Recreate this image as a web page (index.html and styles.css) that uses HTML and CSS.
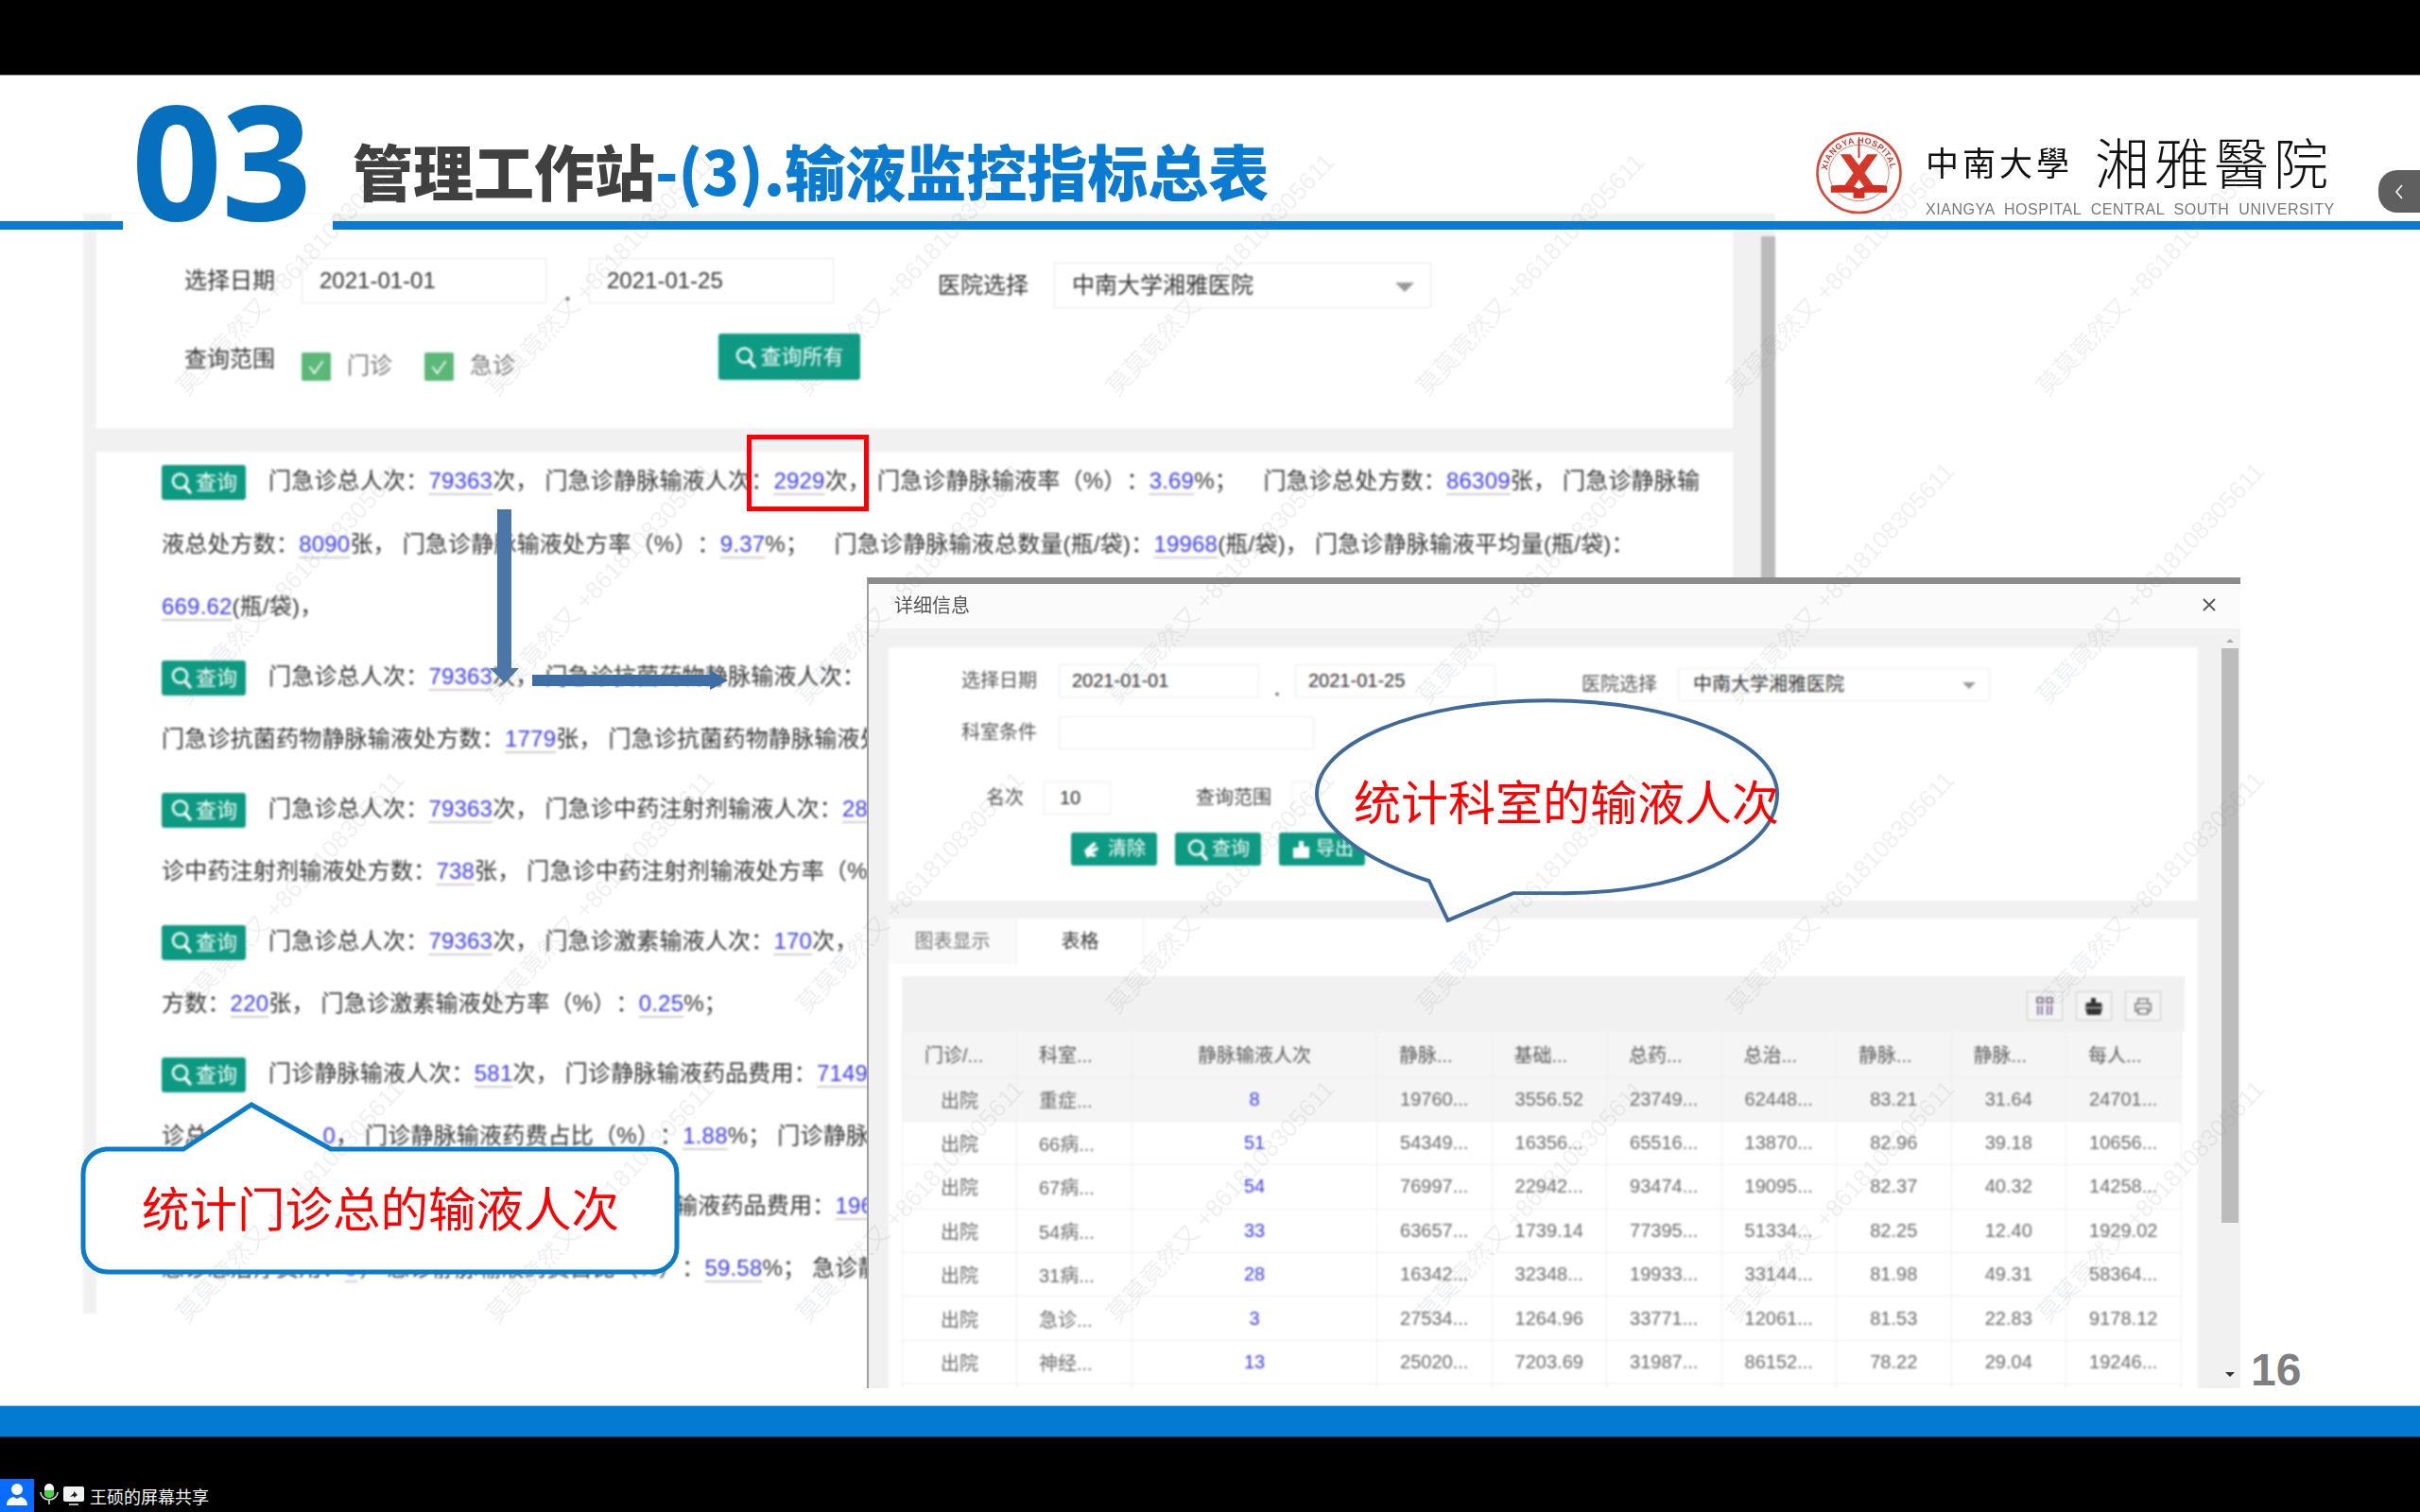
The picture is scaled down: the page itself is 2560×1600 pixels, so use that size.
FILE: index.html
```html
<!DOCTYPE html>
<html lang="zh-CN">
<head>
<meta charset="utf-8">
<title>输液监控指标总表</title>
<link rel="stylesheet" href="styles.css">
</head>
<body>
<svg class="defs" width="0" height="0" aria-hidden="true">
  <symbol id="mag" viewBox="0 0 24 24"><circle cx="10.5" cy="10" r="7.5" fill="none" stroke="currentColor" stroke-width="2.4"/><path d="M16 16l5 6" stroke="currentColor" stroke-width="3.4" stroke-linecap="round"/></symbol>
</svg>
<div class="topbar"></div>
<main class="slide">
  <div class="shot">
    <section class="card query">
      <div class="qrow">
        <span class="lbl">选择日期</span>
        <span class="inp date">2021-01-01</span>
        <span class="sep">.</span>
        <span class="inp date">2021-01-25</span>
        <span class="lbl hosp">医院选择</span>
        <span class="inp sel">中南大学湘雅医院<i class="caret"></i></span>
      </div>
      <div class="qrow second">
        <span class="lbl scope">查询范围</span>
        <span class="chk"><svg viewBox="0 0 30 30"><path d="M8 15l5 7 9-13" fill="none" stroke="#fff" stroke-width="1.6"/></svg></span>
        <span class="chklbl">门诊</span>
        <span class="chk"><svg viewBox="0 0 30 30"><path d="M8 15l5 7 9-13" fill="none" stroke="#fff" stroke-width="1.6"/></svg></span>
        <span class="chklbl">急诊</span>
        <span class="btn big"><svg class="mg"><use href="#mag"/></svg>查询所有</span>
      </div>
    </section>
    <section class="card stats">
      <div class="block">
        <p class="line"><span class="btn"><svg class="mg"><use href="#mag"/></svg>查询</span>门急诊总人次：<u>79363</u>次， 门急诊静脉输液人次：<u>2929</u>次， 门急诊静脉输液率（%）：<u>3.69</u>%；&nbsp;&nbsp;&nbsp; 门急诊总处方数：<u>86309</u>张， 门急诊静脉输</p>
        <p class="line">液总处方数：<u>8090</u>张， 门急诊静脉输液处方率（%）：<u>9.37</u>%；&nbsp;&nbsp;&nbsp; 门急诊静脉输液总数量(瓶/袋)：<u>19968</u>(瓶/袋)， 门急诊静脉输液平均量(瓶/袋)：</p>
        <p class="line"><u>669.62</u>(瓶/袋)，</p>
      </div>
      <div class="block">
        <p class="line"><span class="btn"><svg class="mg"><use href="#mag"/></svg>查询</span>门急诊总人次：<u>79363</u>次， 门急诊抗菌药物静脉输液人次：</p>
        <p class="line">门急诊抗菌药物静脉输液处方数：<u>1779</u>张， 门急诊抗菌药物静脉输液处</p>
      </div>
      <div class="block">
        <p class="line"><span class="btn"><svg class="mg"><use href="#mag"/></svg>查询</span>门急诊总人次：<u>79363</u>次， 门急诊中药注射剂输液人次：<u>28</u></p>
        <p class="line">诊中药注射剂输液处方数：<u>738</u>张， 门急诊中药注射剂输液处方率（%</p>
      </div>
      <div class="block">
        <p class="line"><span class="btn"><svg class="mg"><use href="#mag"/></svg>查询</span>门急诊总人次：<u>79363</u>次， 门急诊激素输液人次：<u>170</u>次，</p>
        <p class="line">方数：<u>220</u>张， 门急诊激素输液处方率（%）：<u>0.25</u>%；</p>
      </div>
      <div class="block">
        <p class="line"><span class="btn"><svg class="mg"><use href="#mag"/></svg>查询</span>门诊静脉输液人次：<u>581</u>次， 门诊静脉输液药品费用：<u>7149</u></p>
        <p class="line">诊总<span class="gap"></span><u>0</u>， 门诊静脉输液药费占比（%）：<u>1.88</u>%； 门诊静脉</p>
      </div>
      <div class="block">
        <p class="line after-callout">输液药品费用：<u>196</u></p>
        <p class="line">急诊总治疗费用：<u>0</u>， 急诊静脉输液药费占比（%）：<u>59.58</u>%； 急诊静</p>
      </div>
    </section>
    <div class="pagebar"></div>
  </div>

  <header class="brand">
    <div class="num-mask"></div>
    <div class="rule left"></div>
    <div class="rule right"></div>
    <div class="num">03</div>
    <h1 class="title"><span class="dark">管理工作站</span><span class="blue">-(3).输液监控指标总表</span></h1>
  </header>

  <div class="logo">
    <svg class="seal" viewBox="0 0 92 88">
      <defs><path id="ringp" d="M12 44a34 32 0 1 1 68 0"/></defs>
      <ellipse cx="46" cy="44" rx="44.5" ry="42.5" fill="#fff" stroke="#d9493a" stroke-width="2.6"/>
      <ellipse cx="46" cy="44" rx="32" ry="30" fill="none" stroke="#e07a6c" stroke-width="1"/>
      <text class="ring"><textPath href="#ringp" startOffset="3%">XIANGYA HOSPITAL</textPath></text>
      <path d="M26 24h11l9 12 9-12h11L52 44l14 20H55L46 51l-9 13H26l14-20z" fill="#d6392a"/>
      <path d="M46 8v20" stroke="#d6392a" stroke-width="2"/>
      <path d="M16 58q16-3 30 3 14-6 30-3v7H52v6h-12v-6H16z" fill="#cf2e20"/>
    </svg>
    <div class="logo-words">
      <div class="logo-cn"><span class="cn-a">中南大學</span><span class="cn-b">湘雅醫院</span></div>
      <div class="logo-en">XIANGYA HOSPITAL CENTRAL SOUTH UNIVERSITY</div>
    </div>
  </div>
  <div class="collapse"><svg viewBox="0 0 12 20" class="chev"><path d="M9 3L3 10l6 7" fill="none" stroke="#fff" stroke-width="1.6"/></svg></div>

  <div class="redbox"></div>

  <svg class="arrows" viewBox="0 0 300 220">
    <path d="M5 0h15v168h8l-15 16-16-16h8z" transform="translate(5 0)" fill="#4a76a8"/>
    <path d="M47 175h188v-5l19 11-19 10v-4H47z" fill="#3f6ea5"/>
  </svg>

  <div class="modal">
    <div class="m-head"><span>详细信息</span><svg class="close" viewBox="0 0 14 14"><path d="M1 1l12 12M13 1L1 13" stroke="#555" stroke-width="1.8"/></svg></div>
    <div class="m-body">
      <section class="m-form">
        <div class="mrow">
          <span class="mlbl">选择日期</span>
          <span class="minp d">2021-01-01</span>
          <span class="msep">.</span>
          <span class="minp d">2021-01-25</span>
          <span class="mlbl mh">医院选择</span>
          <span class="minp msel">中南大学湘雅医院<i class="caret small"></i></span>
        </div>
        <div class="mrow r2">
          <span class="mlbl">科室条件</span>
          <span class="minp dept"></span>
        </div>
        <div class="mrow r3">
          <span class="mlbl rank">名次</span>
          <span class="minp rk">10</span>
          <span class="mlbl sc">查询范围</span>
          <span class="minp scb"></span>
        </div>
        <div class="mrow r4">
          <span class="btn mb"><svg class="mg" viewBox="0 0 24 24"><path d="M2 13l10-9 3 2-6 6 7-3 1 3-7 4 5 1-2 3-5-1-3 2z" fill="currentColor"/></svg>清除</span>
          <span class="btn mb"><svg class="mg"><use href="#mag"/></svg>查询</span>
          <span class="btn mb"><svg class="mg" viewBox="0 0 24 24"><path d="M9 3h5v6h6v12H3V10h6z" fill="currentColor"/></svg>导出</span>
        </div>
      </section>
      <section class="m-tabs">
        <div class="tabs"><span class="tab">图表显示</span><span class="tab on">表格</span></div>
        <div class="tablewrap">
          <div class="tools">
            <span class="tool"><svg viewBox="0 0 24 24"><path d="M4 3h6v5H4zM14 3h6v5h-6z" fill="none" stroke="#6a5a7a" stroke-width="1.5"/><path d="M5 11v10M9 11v10M15 11v10M19 11v10" stroke="#6a4a8a" stroke-width="1.5"/></svg></span>
            <span class="tool"><svg viewBox="0 0 24 24"><path d="M9 3h5v5h6l1 5H3l1-5h5zM3 14h18l-2 7H5z" fill="#333"/></svg></span>
            <span class="tool"><svg viewBox="0 0 24 24"><path d="M7 8V4h10v4M7 17H4V9h16v8h-3" fill="none" stroke="#777" stroke-width="1.7"/><path d="M7 14h10v6H7z" fill="none" stroke="#777" stroke-width="1.7"/></svg></span>
          </div>
          <table class="grid">
            <colgroup><col class="c1"><col class="c2"><col class="c3"><col class="c4"><col class="c4"><col class="c4"><col class="c4"><col class="c4"><col class="c4"><col class="c4"></colgroup>
            <thead><tr><th>门诊/...</th><th>科室...</th><th class="mid">静脉输液人次</th><th>静脉...</th><th>基础...</th><th>总药...</th><th>总治...</th><th>静脉...</th><th>静脉...</th><th>每人...</th></tr></thead>
            <tbody>
              <tr class="hl"><td>出院</td><td class="dp">重症...</td><td class="lnk">8</td><td>19760...</td><td>3556.52</td><td>23749...</td><td>62448...</td><td>83.21</td><td>31.64</td><td>24701...</td></tr>
              <tr><td>出院</td><td class="dp">66病...</td><td class="lnk">51</td><td>54349...</td><td>16356...</td><td>65516...</td><td>13870...</td><td>82.96</td><td>39.18</td><td>10656...</td></tr>
              <tr><td>出院</td><td class="dp">67病...</td><td class="lnk">54</td><td>76997...</td><td>22942...</td><td>93474...</td><td>19095...</td><td>82.37</td><td>40.32</td><td>14258...</td></tr>
              <tr><td>出院</td><td class="dp">54病...</td><td class="lnk">33</td><td>63657...</td><td>1739.14</td><td>77395...</td><td>51334...</td><td>82.25</td><td>12.40</td><td>1929.02</td></tr>
              <tr><td>出院</td><td class="dp">31病...</td><td class="lnk">28</td><td>16342...</td><td>32348...</td><td>19933...</td><td>33144...</td><td>81.98</td><td>49.31</td><td>58364...</td></tr>
              <tr><td>出院</td><td class="dp">急诊...</td><td class="lnk">3</td><td>27534...</td><td>1264.96</td><td>33771...</td><td>12061...</td><td>81.53</td><td>22.83</td><td>9178.12</td></tr>
              <tr><td>出院</td><td class="dp">神经...</td><td class="lnk">13</td><td>25020...</td><td>7203.69</td><td>31987...</td><td>86152...</td><td>78.22</td><td>29.04</td><td>19246...</td></tr>
              <tr><td></td><td></td><td></td><td></td><td></td><td></td><td></td><td></td><td></td><td></td></tr>
            </tbody>
          </table>
        </div>
      </section>
    </div>
    <div class="m-scroll"><i class="up"></i><b></b><i class="down"></i></div>
  </div>

  <div class="bubble">
    <svg viewBox="0 0 500 245"><path d="M124 197C40 170 4 130 4 104 4 50 110 4 250 4s246 46 246 100c0 60-100 108-235 106-18 0-34 0-47 0l-70 29z" fill="#fff" stroke="#3f6b9c" stroke-width="4"/></svg>
    <span class="say">统计科室的输液人次</span>
  </div>

  <div class="callout">
    <svg viewBox="0 0 640 184"><path d="M28 51H110L182 4l84 47H606a26 26 0 0 1 26 26v78a26 26 0 0 1-26 26H30a26 26 0 0 1-26-26V77a26 26 0 0 1 24-26z" fill="#fff" stroke="#0b7cc9" stroke-width="5"/></svg>
    <span class="say two">统计门诊总的输液人次</span>
  </div>

  <div class="pageno">16</div>

  <div class="marks" aria-hidden="true">
    <span>莫莫竟然又 +8618108305611</span><span>莫莫竟然又 +8618108305611</span><span>莫莫竟然又 +8618108305611</span><span>莫莫竟然又 +8618108305611</span><span>莫莫竟然又 +8618108305611</span><span>莫莫竟然又 +8618108305611</span><span>莫莫竟然又 +8618108305611</span>
    <span>莫莫竟然又 +8618108305611</span><span>莫莫竟然又 +8618108305611</span><span>莫莫竟然又 +8618108305611</span><span>莫莫竟然又 +8618108305611</span><span>莫莫竟然又 +8618108305611</span><span>莫莫竟然又 +8618108305611</span><span>莫莫竟然又 +8618108305611</span>
    <span>莫莫竟然又 +8618108305611</span><span>莫莫竟然又 +8618108305611</span><span>莫莫竟然又 +8618108305611</span><span>莫莫竟然又 +8618108305611</span><span>莫莫竟然又 +8618108305611</span><span>莫莫竟然又 +8618108305611</span><span>莫莫竟然又 +8618108305611</span>
    <span>莫莫竟然又 +8618108305611</span><span>莫莫竟然又 +8618108305611</span><span>莫莫竟然又 +8618108305611</span><span>莫莫竟然又 +8618108305611</span><span>莫莫竟然又 +8618108305611</span><span>莫莫竟然又 +8618108305611</span><span>莫莫竟然又 +8618108305611</span>
  </div>
</main>
<div class="footbar"></div>
<footer class="status">
  <span class="avatar"><svg viewBox="0 0 36 35"><circle cx="18" cy="11" r="6" fill="#fff"/><path d="M7 28c0-6 4-8 7-9l4 2 4-2c3 1 7 3 7 9z" fill="#fff"/></svg></span>
  <svg class="mic" viewBox="0 0 20 24"><rect x="5" y="1" width="10" height="15" rx="5" fill="#fff"/><path d="M5 8h10v3a5 5 0 0 1-10 0z" fill="#3fd83f"/><path d="M1 10a9 8 0 0 0 18 0M10 18v5" fill="none" stroke="#ddd" stroke-width="1.6"/></svg>
  <svg class="scr" viewBox="0 0 22 21"><rect x="0" y="0" width="22" height="16" rx="2" fill="#f2f2f2"/><path d="M7 11l4-4V5l4 4-4 3v-2z" fill="#222"/><path d="M6 19h10" stroke="#ddd" stroke-width="1.6"/></svg>
  <span class="who">王硕的屏幕共享</span>
</footer>
</body>
</html>
```
FILE: styles.css
```css
* { box-sizing: border-box; }
html, body { margin: 0; padding: 0; }
body {
  width: 2560px; height: 1600px; overflow: hidden;
  display: flex; flex-direction: column;
  background: #000;
  font-family: "Liberation Sans", "Noto Sans CJK SC", sans-serif;
  text-spacing-trim: space-all;
}
.defs { position: absolute; }
.topbar { height: 80px; background: #000; border-bottom: 1px solid #999; flex: none; }
.slide { position: relative; height: 1407px; flex: none; background: #fff; }
.footbar { height: 34px; flex: none; background: #027bd2; border-top: 1px solid #a8cbe6; border-bottom: 1px solid #04426e; }
.status { flex: 1; display: flex; align-items: flex-end; color: #fff; }

/* screenshot inside the slide */
.shot {
  position: absolute; left: 88px; top: 146px; width: 1790px; height: 1164px;
  background: #f1f1f1; padding: 14px 45px 0 14px;
  display: flex; flex-direction: column; gap: 25px;
  filter: blur(.8px); overflow: hidden;
}
.card { background: #fff; flex: none; width: 1731px; }
.query { height: 213px; padding: 33px 0 0 93px; }
.qrow { display: flex; align-items: flex-start; height: 53px; font-size: 24px; color: #333; }
.qrow.second { margin-top: 27px; height: 49px; }
.lbl { width: 97px; margin-right: 27px; line-height: 48px; white-space: nowrap; }
.inp { display: block; height: 48px; line-height: 46px; border: 1px solid #e7e7e7; background: #fff; color: #333; white-space: nowrap; }
.date { width: 259px; padding-left: 18px; }
.sep { width: 45px; height: 48px; text-align: center; line-height: 74px; font-weight: 700; color: #666; }
.hosp { margin: 5px 27px 0 110px; width: 96px; }
.sel { width: 399px; margin-top: 5px; padding-left: 18px; position: relative; }
.caret { position: absolute; right: 17px; top: 20px; border: 10px solid transparent; border-top-color: #999; border-bottom: 0; }
.caret.small { right: 14px; top: 14px; border-width: 7px; border-bottom: 0; }
.scope { margin-top: 15px; margin-right: 27px; line-height: 24px; }
.chk { width: 31px; height: 30px; margin-top: 20px; background: #5cb878; border-radius: 2px; display: block; }
.chk svg { display: block; width: 100%; height: 100%; }
.chklbl { width: 99px; padding-left: 17px; margin-top: 22px; line-height: 24px; color: #777; }
.btn {
  display: inline-flex; align-items: center; justify-content: center; gap: 3px;
  width: 89px; height: 37px; background: #0d9a82; border-radius: 3px;
  color: #fff; font-size: 22px; line-height: 37px;
  vertical-align: middle; margin-right: 24px; white-space: nowrap;
}
.mg { width: 24px; height: 24px; flex: none; }
.btn.big { width: 150px; height: 49px; margin: 0 0 0 181px; font-size: 22px; }
.stats { height: 930px; padding-left: 69px; overflow: hidden; color: #333; font-size: 24px; letter-spacing: .2px; }
.block { margin-bottom: 7px; }
.block:first-child { margin-top: -2px; }
.line { margin: 0; height: 66.5px; line-height: 66.5px; white-space: nowrap; }
.line u { color: #3b3be6; text-decoration: underline; text-decoration-color: #cfcfcf; text-decoration-thickness: 2px; text-underline-offset: 5px; }
.line .btn { letter-spacing: 0; }
.gap { display: inline-block; width: 122px; }
.after-callout { padding-left: 543px; }
.pagebar { position: absolute; right: 0; top: 24px; width: 15px; height: 1140px; background: #bbb; }

/* header */
.brand { position: static; }
.num-mask { position: absolute; left: 118px; top: 146px; width: 234px; height: 20px; background: #fff; }
.rule { position: absolute; top: 154px; height: 9px; background: #0a7bd0; }
.rule.left { left: 0; width: 130px; }
.rule.right { left: 352px; right: 0; }
.num { position: absolute; left: 139px; top: 4px; font-family: "Open Sans", sans-serif; font-weight: 700; font-size: 168px; line-height: 168px; color: #0670bf; letter-spacing: -1px; filter: blur(.5px); }
.title { position: absolute; left: 373px; top: 54px; margin: 0; font-family: "Noto Sans CJK SC", sans-serif; font-weight: 900; font-size: 64px; line-height: 90px; white-space: nowrap; filter: blur(.7px); }
.dark { color: #404040; }
.blue { color: #0a7bd0; }
.logo { position: absolute; left: 1921px; top: 59px; display: flex; gap: 25px; filter: blur(.6px); }
.seal { width: 91px; height: 88px; display: block; }
.ring { font-size: 9px; fill: #c9392b; font-weight: 700; letter-spacing: .6px; }
.logo-words { width: 440px; }
.logo-cn { display: flex; align-items: center; height: 62px; margin-bottom: 6px; font-family: "Noto Sans CJK TC", sans-serif; color: #111; white-space: nowrap; }
.cn-a { font-size: 35px; letter-spacing: 4px; width: 179px; }
.cn-b { font-size: 58px; letter-spacing: 5px; font-weight: 300; }
.logo-en { font-size: 16px; letter-spacing: .55px; color: #777; word-spacing: 5px; line-height: 18px; margin-top: 12px; white-space: nowrap; }
.collapse { position: absolute; right: 0; top: 100px; width: 44px; height: 45px; background: #5f5f5f; border-radius: 20px 0 0 20px; display: flex; align-items: center; justify-content: center; }
.chev { width: 12px; height: 20px; }
.redbox { position: absolute; left: 790px; top: 380px; width: 129px; height: 81px; border: 5px solid #f00; }
.arrows { position: absolute; left: 516px; top: 459px; width: 300px; height: 220px; overflow: visible; }

/* modal */
.modal { position: absolute; left: 917px; top: 531px; width: 1453px; height: 858px; background: #f1f1f1; border-top: 7px solid #8c8c8c; border-left: 2px solid #a0a0a0; overflow: hidden; }
.m-head { height: 47px; background: #fbfbfb; padding: 0 26px 4px 27px; display: flex; align-items: center; justify-content: space-between; font-size: 20px; color: #555; filter: blur(.7px); }
.close { width: 14px; height: 14px; }
.m-body { padding: 20px 45px 0 21px; filter: blur(.8px); }
.m-form { height: 268px; background: #fff; padding: 18px 0 0 77px; }
.mrow { display: flex; align-items: flex-start; height: 39px; font-size: 20px; color: #555; }
.mlbl { width: 79px; margin-right: 24px; line-height: 35px; white-space: nowrap; }
.minp { display: block; height: 35px; line-height: 33px; border: 1px solid #ececec; background: #fff; color: #333; white-space: nowrap; position: relative; }
.d { width: 212px; padding-left: 13px; }
.msep { width: 38px; height: 35px; text-align: center; line-height: 52px; font-weight: 700; }
.mh { margin: 4px 23px 0 91px; }
.msel { width: 330px; margin-top: 4px; padding-left: 15px; }
.mrow.r2 { margin-top: 16px; height: 35px; }
.dept { width: 270px; }
.mrow.r3 { margin-top: 34px; height: 34px; }
.rank { width: 66px; margin-right: 21px; text-align: right; }
.rk { width: 71px; padding-left: 16px; }
.sc { margin: 0 22px 0 90px; color: #444; }
.scb { width: 130px; padding-left: 17px; }
.mrow.r4 { margin-top: 20px; height: 35px; padding-left: 116px; gap: 19px; }
.mb { width: 91px; height: 35px; margin: 0; font-size: 20px; }
.m-tabs { margin-top: 19px; height: 600px; background: #fff; }
.tabs { display: flex; height: 48px; font-size: 20px; }
.tab { width: 136px; text-align: center; line-height: 48px; background: #fafafa; color: #777; border-right: 1px solid #eee; }
.tab.on { width: 134px; background: #fff; color: #333; }
.tablewrap { padding: 13px 0 0 14px; }
.tools { width: 1357px; height: 59px; background: #f1f1f1; display: flex; justify-content: flex-end; gap: 14px; padding: 16px 25px 0 0; }
.tool { width: 38px; height: 31px; border: 1px solid #ccc; background: #f4f4f4; display: flex; align-items: center; justify-content: center; }
.tool svg { width: 24px; height: 24px; }
.grid { width: 1353px; border-collapse: collapse; table-layout: fixed; font-size: 20px; color: #6a6a6a; }
.c1 { width: 121px; } .c2 { width: 122px; } .c3 { width: 259px; } .c4 { width: 121.5px; }
.grid th { height: 48px; background: #f5f5f5; font-weight: 400; text-align: left; padding: 0 0 0 23px; color: #5a5a5a; border: 1px solid #ececec; border-top: 0; white-space: nowrap; overflow: hidden; }
.grid th.mid { text-align: center; padding: 0; }
.grid td { height: 46.4px; padding: 0; text-align: center; border: 1px solid #eee; white-space: nowrap; overflow: hidden; }
.grid td.dp { text-align: left; padding-left: 23px; }
.grid td.lnk { color: #3b3be6; }
.grid tr.hl td { background: #f5f5f5; }
.m-scroll { position: absolute; right: 2px; top: 0; bottom: 0; width: 18px; display: flex; flex-direction: column; align-items: center; padding-top: 58px; }
.m-scroll b { display: block; width: 18px; height: 608px; background: #bcbcbc; margin-top: 6px; }
.m-scroll .up { border: 4px solid transparent; border-bottom-color: #aaa; border-top: 0; }
.m-scroll .down { border: 5px solid transparent; border-top-color: #333; border-bottom: 0; margin-top: 158px; }

/* callouts */
.bubble { position: absolute; left: 1389px; top: 656px; width: 495px; height: 245px; }
.bubble svg, .callout svg { display: block; width: 100%; height: 100%; }
.say { position: absolute; font-family: "Noto Sans CJK SC", sans-serif; font-size: 50px; line-height: 60px; color: #f00; white-space: nowrap; }
.bubble .say { left: 43px; top: 80px; }
.callout { position: absolute; left: 84px; top: 1085px; width: 640px; height: 184px; }
.callout .say { left: 66px; top: 81px; font-size: 50.5px; }
.pageno { position: absolute; left: 2381px; top: 1342px; font-size: 48px; line-height: 56px; font-weight: 700; color: #7f7f7f; }

/* watermark */
.marks { position: absolute; left: 141px; top: 45px; display: grid; grid-template-columns: repeat(7, 328px); grid-auto-rows: 327px; pointer-events: none; }
.marks span { display: flex; align-items: center; justify-content: center; white-space: nowrap; font-size: 26px; color: rgba(120, 130, 150, .12); transform: rotate(-47deg); }

/* share bar */
.avatar { width: 36px; height: 35px; background: #0a6cff; flex: none; }
.avatar svg { display: block; width: 100%; height: 100%; }
.mic { width: 20px; height: 24px; margin: 0 0 7px 6px; flex: none; }
.scr { width: 22px; height: 21px; margin: 0 0 6px 5px; flex: none; }
.who { margin: 0 0 4px 6px; font-family: "Noto Sans CJK SC", sans-serif; font-size: 18px; line-height: 26px; color: #f2f2f2; }
```
